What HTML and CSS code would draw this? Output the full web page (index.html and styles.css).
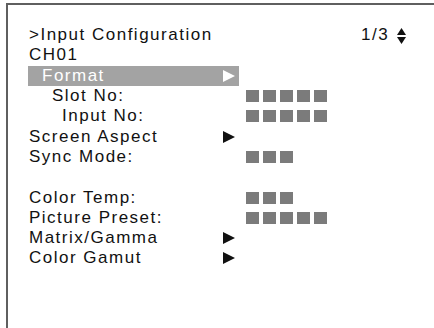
FILE: index.html
```html
<!DOCTYPE html>
<html>
<head>
<meta charset="utf-8">
<link rel="stylesheet" href="styles.css">
</head>
<body>
<div class="screen">
  <div class="row head">
    <span class="title">&gt;Input Configuration</span>
    <span class="page">1/3</span>
    <svg class="updown" width="9" height="16" viewBox="0 0 9 16"><polygon points="4.5,0 9,7 0,7" fill="#111"/><polygon points="0,9 9,9 4.5,16" fill="#111"/></svg>
  </div>
  <div class="row"><span class="label">CH01</span></div>
  <div class="row selected">
    <span class="label sub1">Format</span>
    <svg class="tri" width="12" height="12" viewBox="0 0 12 12"><polygon points="0,0 12,6 0,12" fill="#fff"/></svg>
  </div>
  <div class="row">
    <span class="label sub2">Slot No:</span>
    <span class="boxes"><i></i><i></i><i></i><i></i><i></i></span>
  </div>
  <div class="row">
    <span class="label sub3">Input No:</span>
    <span class="boxes"><i></i><i></i><i></i><i></i><i></i></span>
  </div>
  <div class="row">
    <span class="label">Screen Aspect</span>
    <svg class="tri" width="12" height="12" viewBox="0 0 12 12"><polygon points="0,0 12,6 0,12" fill="#111"/></svg>
  </div>
  <div class="row">
    <span class="label">Sync Mode:</span>
    <span class="boxes"><i></i><i></i><i></i></span>
  </div>
  <div class="row"></div>
  <div class="row">
    <span class="label">Color Temp:</span>
    <span class="boxes"><i></i><i></i><i></i></span>
  </div>
  <div class="row">
    <span class="label">Picture Preset:</span>
    <span class="boxes"><i></i><i></i><i></i><i></i><i></i></span>
  </div>
  <div class="row">
    <span class="label">Matrix/Gamma</span>
    <svg class="tri" width="12" height="12" viewBox="0 0 12 12"><polygon points="0,0 12,6 0,12" fill="#111"/></svg>
  </div>
  <div class="row">
    <span class="label">Color Gamut</span>
    <svg class="tri" width="12" height="12" viewBox="0 0 12 12"><polygon points="0,0 12,6 0,12" fill="#111"/></svg>
  </div>
</div>
</body>
</html>
```
FILE: styles.css
```css
html, body {
  margin: 0;
  padding: 0;
  background: #fff;
}
body {
  width: 434px;
  height: 328px;
  overflow: hidden;
}
.screen {
  margin: 3px 0 0 6px;
  height: 325px;
  border-top: 2px solid #5f5f5f;
  border-left: 2px solid #5f5f5f;
  padding: 20px 0 0 21px;
  box-sizing: border-box;
  font-family: "Liberation Sans", Arial, sans-serif;
  font-size: 17px;
  letter-spacing: 1.5px;
  color: #111;
}
.row {
  display: flex;
  align-items: center;
  height: 20.3px;
  white-space: nowrap;
}
.label {
  width: 194px;
  flex: none;
}
.sub1 { padding-left: 13px; box-sizing: border-box; width: 194px; }
.sub2 { padding-left: 23px; box-sizing: border-box; }
.sub3 { padding-left: 33px; box-sizing: border-box; }
.head .title {
  width: 332px;
  flex: none;
}
.head .page {
  width: 36px;
  flex: none;
}
.updown {
  margin-top: 1px;
}
.selected {
  background: #a3a3a3;
  color: #fff;
  width: 211px;
  margin-left: -1px;
  padding-left: 1px;
  box-sizing: border-box;
}
.tri {
  flex: none;
  display: block;
}
.boxes {
  display: flex;
  gap: 4px;
  margin-left: 23px;
}
.boxes i {
  display: block;
  width: 13px;
  height: 12px;
  background: #7b7b7b;
}
```
